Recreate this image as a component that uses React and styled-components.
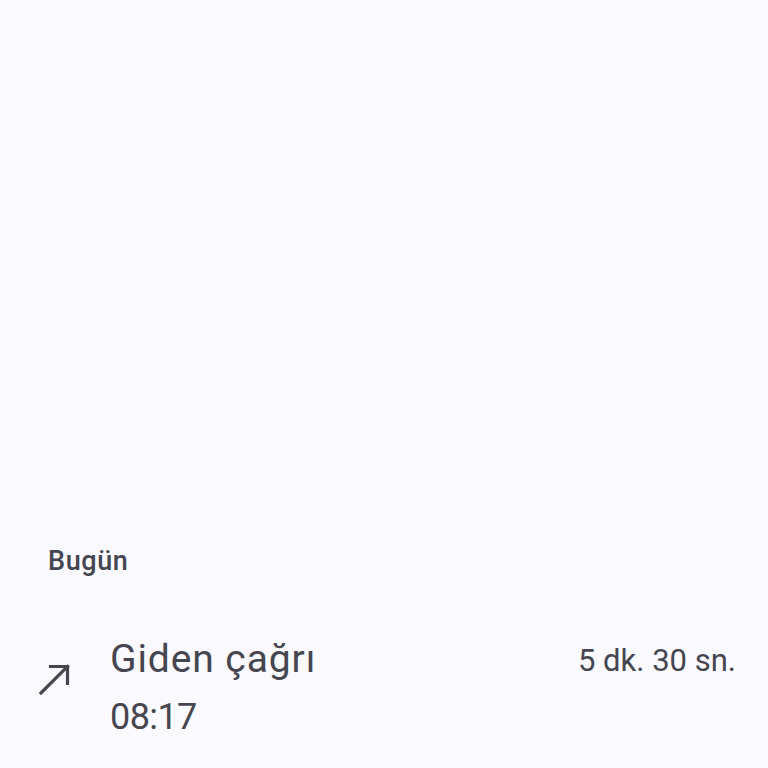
import styled, { createGlobalStyle } from 'styled-components';

const GlobalStyle = createGlobalStyle`
html, body {
  margin: 0;
  padding: 0;
  background: #f9f9fe;
}
body {
  font-family: Roboto, "Noto Sans", sans-serif;
  color: #45464f;
}
`;

function OutgoingIcon() {
    return (
        <svg width="32" height="32" viewBox="0 0 32 32" fill="none">
            <path d="M3 30 L29.5 3.5" stroke="#45464f" strokeWidth="3.2" strokeLinecap="square" />
            <path d="M11 3.5 H29.5 V22" stroke="#45464f" strokeWidth="3.2" />
        </svg>
    );
}

function App() {
    return (
        <Page>
            <GlobalStyle />
            <Section>
                <SectionTitle>Bugün</SectionTitle>
                <CallRow>
                    <IconCell>
                        <OutgoingIcon />
                    </IconCell>
                    <CallInfo>
                        <CallType>Giden çağrı</CallType>
                        <CallTime>08:17</CallTime>
                    </CallInfo>
                    <Duration>5 dk. 30 sn.</Duration>
                </CallRow>
            </Section>
        </Page>
    );
}

export default App;

const Page = styled.div`
height: 100vh;
display: flex;
flex-direction: column;
justify-content: flex-end;
background: #f9f9fe;
`

const Section = styled.div`
display: flex;
flex-direction: column;
padding-bottom: 22px;
`

const SectionTitle = styled.div`
padding-left: 48px;
font-size: 27px;
font-weight: 500;
letter-spacing: 0.6px;
line-height: 30px;
margin-bottom: 60px;
`

const CallRow = styled.div`
display: flex;
align-items: flex-start;
padding: 0 32px 0 38px;
`

const IconCell = styled.div`
width: 72px;
padding-top: 27px;
display: flex;
`

const CallInfo = styled.div`
flex: 1;
display: flex;
flex-direction: column;
`

const CallType = styled.div`
font-size: 39px;
letter-spacing: 0.9px;
line-height: 46px;
`

const CallTime = styled.div`
margin-top: 6px;
font-size: 36px;
letter-spacing: -0.6px;
line-height: 58px;
`

const Duration = styled.div`
padding-top: 2px;
font-size: 31px;
line-height: 46px;
`
